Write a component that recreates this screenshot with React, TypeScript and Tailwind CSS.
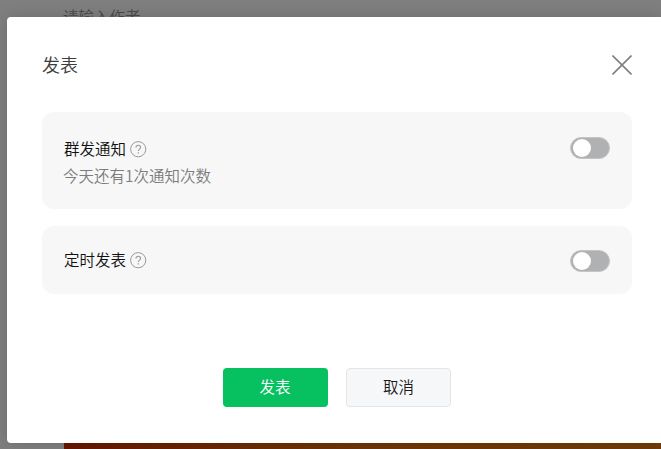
import React from "react";

function HelpIcon() {
  return (
    <svg width="17" height="17" viewBox="0 0 17 17" fill="none" stroke="#999">
      <circle cx="8.2" cy="8.2" r="7.6" />
      <path d="M6 6.6c0-1.4 1-2.3 2.3-2.3s2.3.9 2.3 2.1c0 1.7-2.3 1.8-2.3 3.6" strokeWidth="1.1" />
      <path d="M8.3 11.2v1.3" strokeWidth="1.2" />
    </svg>
  );
}

function Switch() {
  return (
    <button className="flex h-[22px] w-10 items-center rounded-full border border-[#c4c5c6] bg-[#b0b1b3] pl-[2px]">
      <span className="h-[18px] w-[18px] rounded-full bg-white" />
    </button>
  );
}

function Label({ text }: { text: string }) {
  return (
    <div className="flex items-start gap-1">
      <span className="text-[15.5px] leading-6 text-[#111]">{text}</span>
      <span className="pt-[5px]">
        <HelpIcon />
      </span>
    </div>
  );
}

export default function App() {
  return (
    <div className="relative h-[449px] w-[661px] overflow-hidden bg-[#7f7f7f] font-['Noto_Sans_CJK_SC',sans-serif] font-[350]">
      <div className="flex h-full flex-col justify-between pl-16">
        <div className="-ml-px pt-1 text-[15.5px] leading-6 text-[#4a4a4a]">请输入作者</div>
        <div className="h-8 bg-gradient-to-r from-[#671600] via-[#6f3606] to-[#713c08]" />
      </div>

      <div className="absolute top-[17px] left-[7px] h-[426px] w-[654px] rounded-l-[4px] bg-white pr-[29px] pl-[35px] shadow-[0_0_16px_rgba(0,0,0,0.16)]">
        <div className="flex h-[95px] items-center justify-between">
          <h3 className="pb-[2px] text-[18px] leading-7 text-[#3c3c3c]">发表</h3>
          <button>
            <svg width="20" height="20" viewBox="0 0 20 20" stroke="#7d7f80" strokeWidth="1.6">
              <path d="M.5.5l19 19M19.5.5l-19 19" />
            </svg>
          </button>
        </div>

        <div className="flex h-[97px] items-start justify-between rounded-xl bg-[#f7f7f7] pt-[25px] pr-[22px] pl-[22px]">
          <div className="-mt-px">
            <Label text="群发通知" />
            <p className="-ml-px mt-[3px] text-[15.5px] leading-6 text-[#7c7c7c]">今天还有1次通知次数</p>
          </div>
          <Switch />
        </div>

        <div className="mt-[17px] flex h-[68px] items-start justify-between rounded-xl bg-[#f7f7f7] pt-6 pr-[22px] pl-[22px]">
          <div className="-mt-[3px]">
            <Label text="定时发表" />
          </div>
          <Switch />
        </div>

        <div className="mt-[74px] ml-[181px] flex gap-[18px] text-[15.5px]">
          <button className="h-[39px] w-[105px] rounded-[4px] bg-[#07c160] pr-px pb-px text-white">发表</button>
          <button className="h-[39px] w-[105px] rounded-[4px] border border-[#e4e5e6] bg-[#f6f7f9] pb-px text-[#1a1a1a]">取消</button>
        </div>
      </div>
    </div>
  );
}
